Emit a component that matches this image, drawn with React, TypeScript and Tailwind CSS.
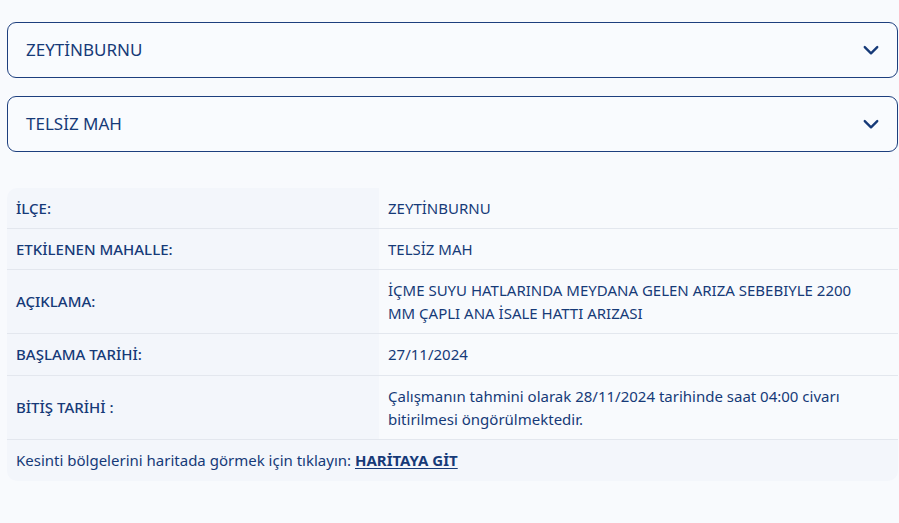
const rows: { label: string; value: React.ReactNode; h: string }[] = [
  { label: 'İLÇE:', value: 'ZEYTİNBURNU', h: 'h-[40px]' },
  { label: 'ETKİLENEN MAHALLE:', value: 'TELSİZ MAH', h: 'h-[40px]' },
  {
    label: 'AÇIKLAMA:',
    value: 'İÇME SUYU HATLARINDA MEYDANA GELEN ARIZA SEBEBIYLE 2200 MM ÇAPLI ANA İSALE HATTI ARIZASI',
    h: 'h-[63px]',
  },
  { label: 'BAŞLAMA TARİHİ:', value: '27/11/2024', h: 'h-[41px]' },
  {
    label: 'BİTİŞ TARİHİ :',
    value: 'Çalışmanın tahmini olarak 28/11/2024 tarihinde saat 04:00 civarı bitirilmesi öngörülmektedir.',
    h: 'h-[63px]',
  },
];

function Chevron() {
  return (
    <svg className="w-[20px] h-[20px]" viewBox="0 0 24 24" fill="none" stroke="currentColor" strokeWidth="2.8" strokeLinecap="round" strokeLinejoin="round" aria-hidden="true">
      <path d="M4.5 8.5l7.5 7.5 7.5-7.5" />
    </svg>
  );
}

function SelectBox({ value }: { value: string }) {
  return (
    <div className="h-[56px] flex items-center justify-between border border-[#1d3f7e] rounded-[9px] pl-[18px] pr-[16px] text-[#163a78] bg-[#f9fbfe]">
      <span className="text-[17px]">{value}</span>
      <Chevron />
    </div>
  );
}

export default function App() {
  return (
    <div className="min-h-[523px] bg-[#f8fafd] pl-[7px] pr-[1px] pt-[22px] text-[#163a78]" style={{ fontFamily: '"Noto Sans", Lato, sans-serif' }}>
      <div className="flex flex-col gap-[18px]">
        <SelectBox value="ZEYTİNBURNU" />
        <SelectBox value="TELSİZ MAH" />
      </div>

      <div className="mt-[36px] rounded-[10px] overflow-hidden bg-[#f3f6fb]">
        {rows.map((r) => (
          <div key={r.label} className="flex border-b border-[#e3e7ee]">
            <div className={`w-[372px] flex-shrink-0 flex items-center pl-[9px] text-[15px] font-medium ${r.h}`}>
              {r.label}
            </div>
            <div className="flex-1 flex items-center bg-[#f8fafd] pl-[9px] pr-[30px] text-[15px] leading-[23px]">
              <span>{r.value}</span>
            </div>
          </div>
        ))}
        <div className="h-[41px] flex items-center pl-[9px] text-[15px]">
          <span>
            Kesinti bölgelerini haritada görmek için tıklayın:{' '}
            <a href="#" className="font-bold underline underline-offset-2">HARİTAYA GİT</a>
          </span>
        </div>
      </div>
    </div>
  );
}
